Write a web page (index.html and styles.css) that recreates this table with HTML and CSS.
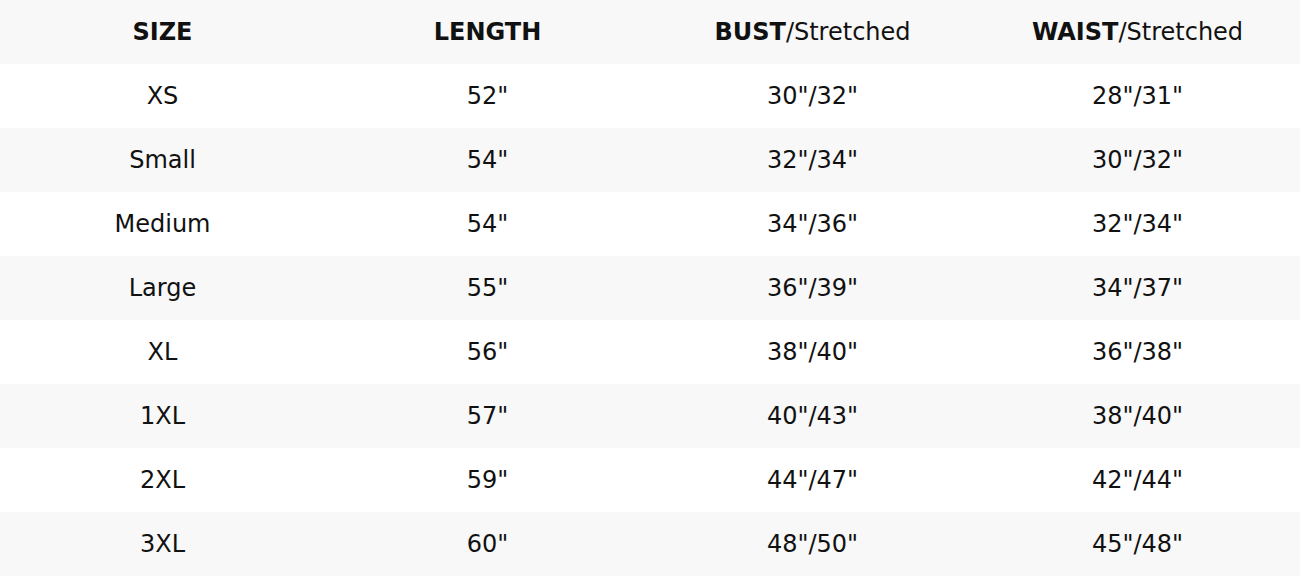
FILE: index.html
```html
<!DOCTYPE html>
<html>
<head>
<meta charset="utf-8">
<link rel="stylesheet" href="styles.css">
</head>
<body>
<table class="chart">
  <thead>
    <tr><th>SIZE</th><th>LENGTH</th><th>BUST<span class="sub">/Stretched</span></th><th>WAIST<span class="sub">/Stretched</span></th></tr>
  </thead>
  <tbody>
    <tr><td>XS</td><td>52"</td><td>30"/32"</td><td>28"/31"</td></tr>
    <tr><td>Small</td><td>54"</td><td>32"/34"</td><td>30"/32"</td></tr>
    <tr><td>Medium</td><td>54"</td><td>34"/36"</td><td>32"/34"</td></tr>
    <tr><td>Large</td><td>55"</td><td>36"/39"</td><td>34"/37"</td></tr>
    <tr><td>XL</td><td>56"</td><td>38"/40"</td><td>36"/38"</td></tr>
    <tr><td>1XL</td><td>57"</td><td>40"/43"</td><td>38"/40"</td></tr>
    <tr><td>2XL</td><td>59"</td><td>44"/47"</td><td>42"/44"</td></tr>
    <tr><td>3XL</td><td>60"</td><td>48"/50"</td><td>45"/48"</td></tr>
  </tbody>
</table>
</body>
</html>
```
FILE: styles.css
```css
html, body { margin: 0; padding: 0; background: #fff; }
.chart {
  width: 1300px;
  border-collapse: collapse;
  table-layout: fixed;
  font-family: "DejaVu Sans", sans-serif;
  font-size: 24px;
  color: #111;
}
.chart th, .chart td {
  height: 64px;
  padding: 0;
  text-align: center;
  vertical-align: middle;
  width: 325px;
}
.chart th { font-weight: bold; }
.chart .sub { font-weight: normal; }
.chart thead tr { background: #f8f8f8; }
.chart tbody tr:nth-child(even) { background: #f8f8f8; }
.chart tbody tr:nth-child(odd) { background: #fff; }
```
